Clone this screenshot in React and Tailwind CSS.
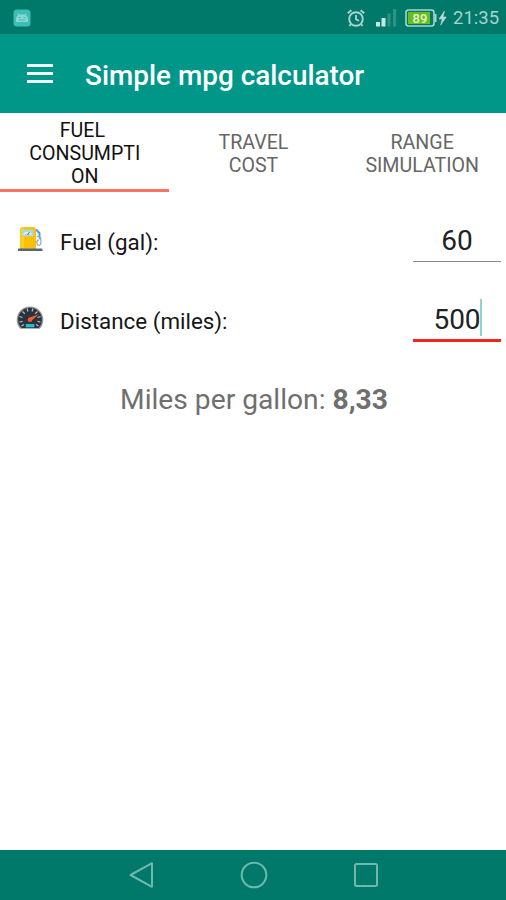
import { useState } from "react";
import clsx from "clsx";

const TABS = [
  { id: "fuel", lines: ["FUEL\u00a0", "CONSUMPTI", "ON"] },
  { id: "travel", lines: ["TRAVEL", "COST"] },
  { id: "range", lines: ["RANGE", "SIMULATION"] },
];

const AlarmIcon = () => (
  <svg width="20" height="20" viewBox="0 0 20 20" fill="none" stroke="#a9d3cc" strokeWidth="1.9">
    <circle cx="10" cy="11" r="6.8" />
    <path d="M10 7v4.3l3 1.6M1.8 5.2l3.6-3M18.2 5.2l-3.6-3M5 16l-1.6 2M15 16l1.6 2" />
  </svg>
);

const SignalIcon = () => (
  <svg width="22" height="19" viewBox="0 0 22 19">
    <rect x="0" y="14" width="4" height="4.5" fill="#c5e8e2" />
    <rect x="5.5" y="10" width="4" height="8.5" fill="#c5e8e2" />
    <rect x="11.5" y="5.5" width="3" height="13" fill="#2e9384" />
    <rect x="17" y="1" width="3.2" height="17.5" fill="#2e9384" />
  </svg>
);

const BatteryIcon = () => (
  <svg width="42" height="20" viewBox="0 0 42 20">
    <rect x="1" y="2" width="28" height="16" rx="2.5" fill="#00796b" stroke="#a9d3cc" strokeWidth="1.6" />
    <rect x="3" y="4" width="22" height="12" fill="#6abd20" />
    <path d="M29.5 6h2v8h-2z" fill="#a9d3cc" />
    <text
      x="15"
      y="14.7"
      textAnchor="middle"
      fontFamily="Roboto, sans-serif"
      fontSize="13"
      fontWeight="500"
      fill="#e2f6d0"
    >
      89
    </text>
    <path d="M39.5 3l-5.5 8h3.2l-1.5 6 5.6-8H38z" fill="#b5dad4" stroke="#b5dad4" strokeWidth=".6" />
  </svg>
);

const AndroidIcon = () => (
  <svg width="18" height="18" viewBox="0 0 18 18">
    <rect x="0.5" y="0.5" width="17" height="17" rx="3.5" fill="#3dbdb3" />
    <path d="M3 13v-2.500c0-2 1-3.500 2.300-4.200L4.500 4.700l.9-.4 1.200 1.500a7 7 0 0 1 4.800 0l1.200-1.500.9.4-.8 1.600C14 7 15 8.500 15 10.500V13z" fill="#8bd8d0" />
    <path d="M5.500 8.500h2M10.500 8.500h2M5.500 11h7" stroke="#3dbdb3" />
  </svg>
);

const FuelIcon = () => (
  <svg width="28" height="28" viewBox="0 0 28 28">
    <path d="M20 4.500l3.500 3.700v4.300l1.300 1.500" fill="none" stroke="#4a9be0" strokeWidth="2" />
    <path d="M20.500 11.500c4-.5 4.800 3 4.400 6.500-.3 3-3.600 3-4 .5-.3-2.500.2-3.500 2-3.500" fill="none" stroke="#9baab2" strokeWidth="1.300" />
    <path d="M4 24V5a3 3 0 0 1 3-3h10a3 3 0 0 1 3 3v19z" fill="#fdbf0b" />
    <path d="M4.500 23V5A2.500 2.500 0 0 1 7 2.500h1V23z" fill="#ffcd28" />
    <rect x="6" y="4.500" width="11.500" height="6.800" rx="1" fill="#a7dcda" />
    <path d="M7.500 9.500c1.500-2.500 6.500-2.500 8 0" fill="none" stroke="#edf7f2" strokeWidth="1.300" />
    <path d="M11.500 10l2-3" stroke="#39849a" />
    <rect x="2" y="23.500" width="24.500" height="2.500" rx=".5" fill="#526878" />
  </svg>
);

const SpeedIcon = () => (
  <svg width="28" height="26" viewBox="0 0 28 26">
    <path d="M4.200 24.800A13.300 13.300 0 1 1 23.800 24.800z" fill="#8e979c" />
    <path d="M5.500 24A11.900 11.900 0 1 1 22.500 24z" fill="#29343d" />
    <path
      d="M3.500 18l3-.7M3.500 12.500l3 1M6.500 7.500l2.300 2.200M11 4.500l1 3M17 4.500l-1 3M21.500 7.500l-2.300 2.200M24.500 12.500l-3 1M24.500 18l-3-.7M5.500 22l2.500-1.500M22.500 22L20 20.500"
      stroke="#b8c0c2"
      strokeWidth="1.200"
    />
    <path d="M13 13.800l9.800-3.600-7.700 6.800z" fill="#f75b2d" />
    <circle cx="14" cy="15.700" r="2.300" fill="#f75b2d" />
    <rect x="9.800" y="20" width="8.600" height="3.300" fill="#22bfd7" />
  </svg>
);

const StatusBar = () => (
  <div className="flex h-[34px] items-center bg-[#00796b] pl-[13px] pr-[7px] pt-px">
    <AndroidIcon />
    <div className="ml-auto flex items-center">
      <AlarmIcon />
      <div className="ml-[10px]">
        <SignalIcon />
      </div>
      <div className="ml-[7px]">
        <BatteryIcon />
      </div>
      <span className="ml-[6px] w-[46px] whitespace-nowrap pt-[2px] text-[18.5px] leading-none text-[#a9d3cc]">21:35</span>
    </div>
  </div>
);

const Header = () => (
  <header className="flex h-[79px] items-center bg-[#009688]">
    <button className="ml-[27px] flex w-[26px] flex-col gap-[5px]" aria-label="Menu">
      <span className="h-[3px] w-full bg-[#eef9f7]" />
      <span className="h-[3px] w-full bg-[#eef9f7]" />
      <span className="h-[3px] w-full bg-[#eef9f7]" />
    </button>
    <h1 className="ml-[32px] whitespace-nowrap pt-[4px] text-[27.9px] font-medium leading-none text-white">
      Simple mpg calculator
    </h1>
  </header>
);

const Field = ({ icon, label, value, active, onChange }) => (
  <div className="flex h-[79px] items-start pl-4 pr-[5px]">
    <div className="mt-[23px]">{icon}</div>
    <label className="ml-4 mt-[25px] whitespace-nowrap text-[22.4px] leading-[30px] text-[#161616]">{label}</label>
    <div
      className={clsx(
        "ml-auto flex w-[88px] items-end justify-center",
        active ? "h-[61px] border-b-[3px] border-[#f4261b]" : "h-[60px] border-b-[1.5px] border-[#8a8a8a]"
      )}
    >
      <div className={clsx("relative", active ? "mb-[3px]" : "mb-[4px]")}>
        <input
          className="block h-[34px] w-[88px] bg-transparent text-center text-[28px] leading-none text-[#222] outline-none"
          value={value}
          onChange={(e) => onChange(e.target.value)}
        />
        {active && <span className="absolute right-[19px] top-[-3px] h-[37px] w-[2px] bg-[#8fd3cd]" />}
      </div>
    </div>
  </div>
);

const NavBar = () => (
  <nav className="mt-auto flex h-[50px] items-center justify-between bg-[#00796b] pl-[128px] pr-[127px]">
    <svg width="26" height="28" viewBox="0 0 26 28" fill="none" stroke="#6fb8ad" strokeWidth="2" strokeLinejoin="round">
      <path d="M2.500 14L24 2.200v23.600z" />
    </svg>
    <svg width="28" height="28" viewBox="0 0 28 28" fill="none" stroke="#6fb8ad" strokeWidth="2">
      <circle cx="14" cy="14" r="12.300" />
    </svg>
    <svg width="26" height="26" viewBox="0 0 26 26" fill="none" stroke="#6fb8ad" strokeWidth="2">
      <rect x="2" y="2" width="22" height="22" rx="1.500" />
    </svg>
  </nav>
);

const App = () => {
  const [tab, setTab] = useState("fuel");
  const [fuel, setFuel] = useState("60");
  const [distance, setDistance] = useState("500");

  const mpg = (Number(distance) / Number(fuel)).toFixed(2).replace(".", ",");

  return (
    <div className="flex h-[900px] w-[506px] flex-col overflow-hidden bg-white font-['Roboto',sans-serif]">
      <StatusBar />
      <Header />
      <div className="grid h-[79px] grid-cols-3">
        {TABS.map((t) => (
          <button
            key={t.id}
            onClick={() => setTab(t.id)}
            className={clsx(
              "flex flex-col items-center justify-center border-b-[3px] pl-px pt-[5px] text-[19.6px] leading-[23px]",
              tab === t.id ? "border-[#f9735f] text-[#111]" : "border-transparent text-[#666]"
            )}
          >
            {t.lines.map((line) => (
              <span key={line} className="block">
                {line}
              </span>
            ))}
          </button>
        ))}
      </div>
      <main className="pt-[10px]">
        <Field icon={<FuelIcon />} label="Fuel (gal):" value={fuel} onChange={setFuel} />
        <Field icon={<SpeedIcon />} label="Distance (miles):" value={distance} onChange={setDistance} active />
        <p className="mt-[22px] whitespace-nowrap pl-[2px] text-center text-[28.2px] leading-[36px] text-[#6f6f6f]">
          Miles per gallon: <b className="font-bold">{mpg}</b>
        </p>
      </main>
      <NavBar />
    </div>
  );
};

export default App;
